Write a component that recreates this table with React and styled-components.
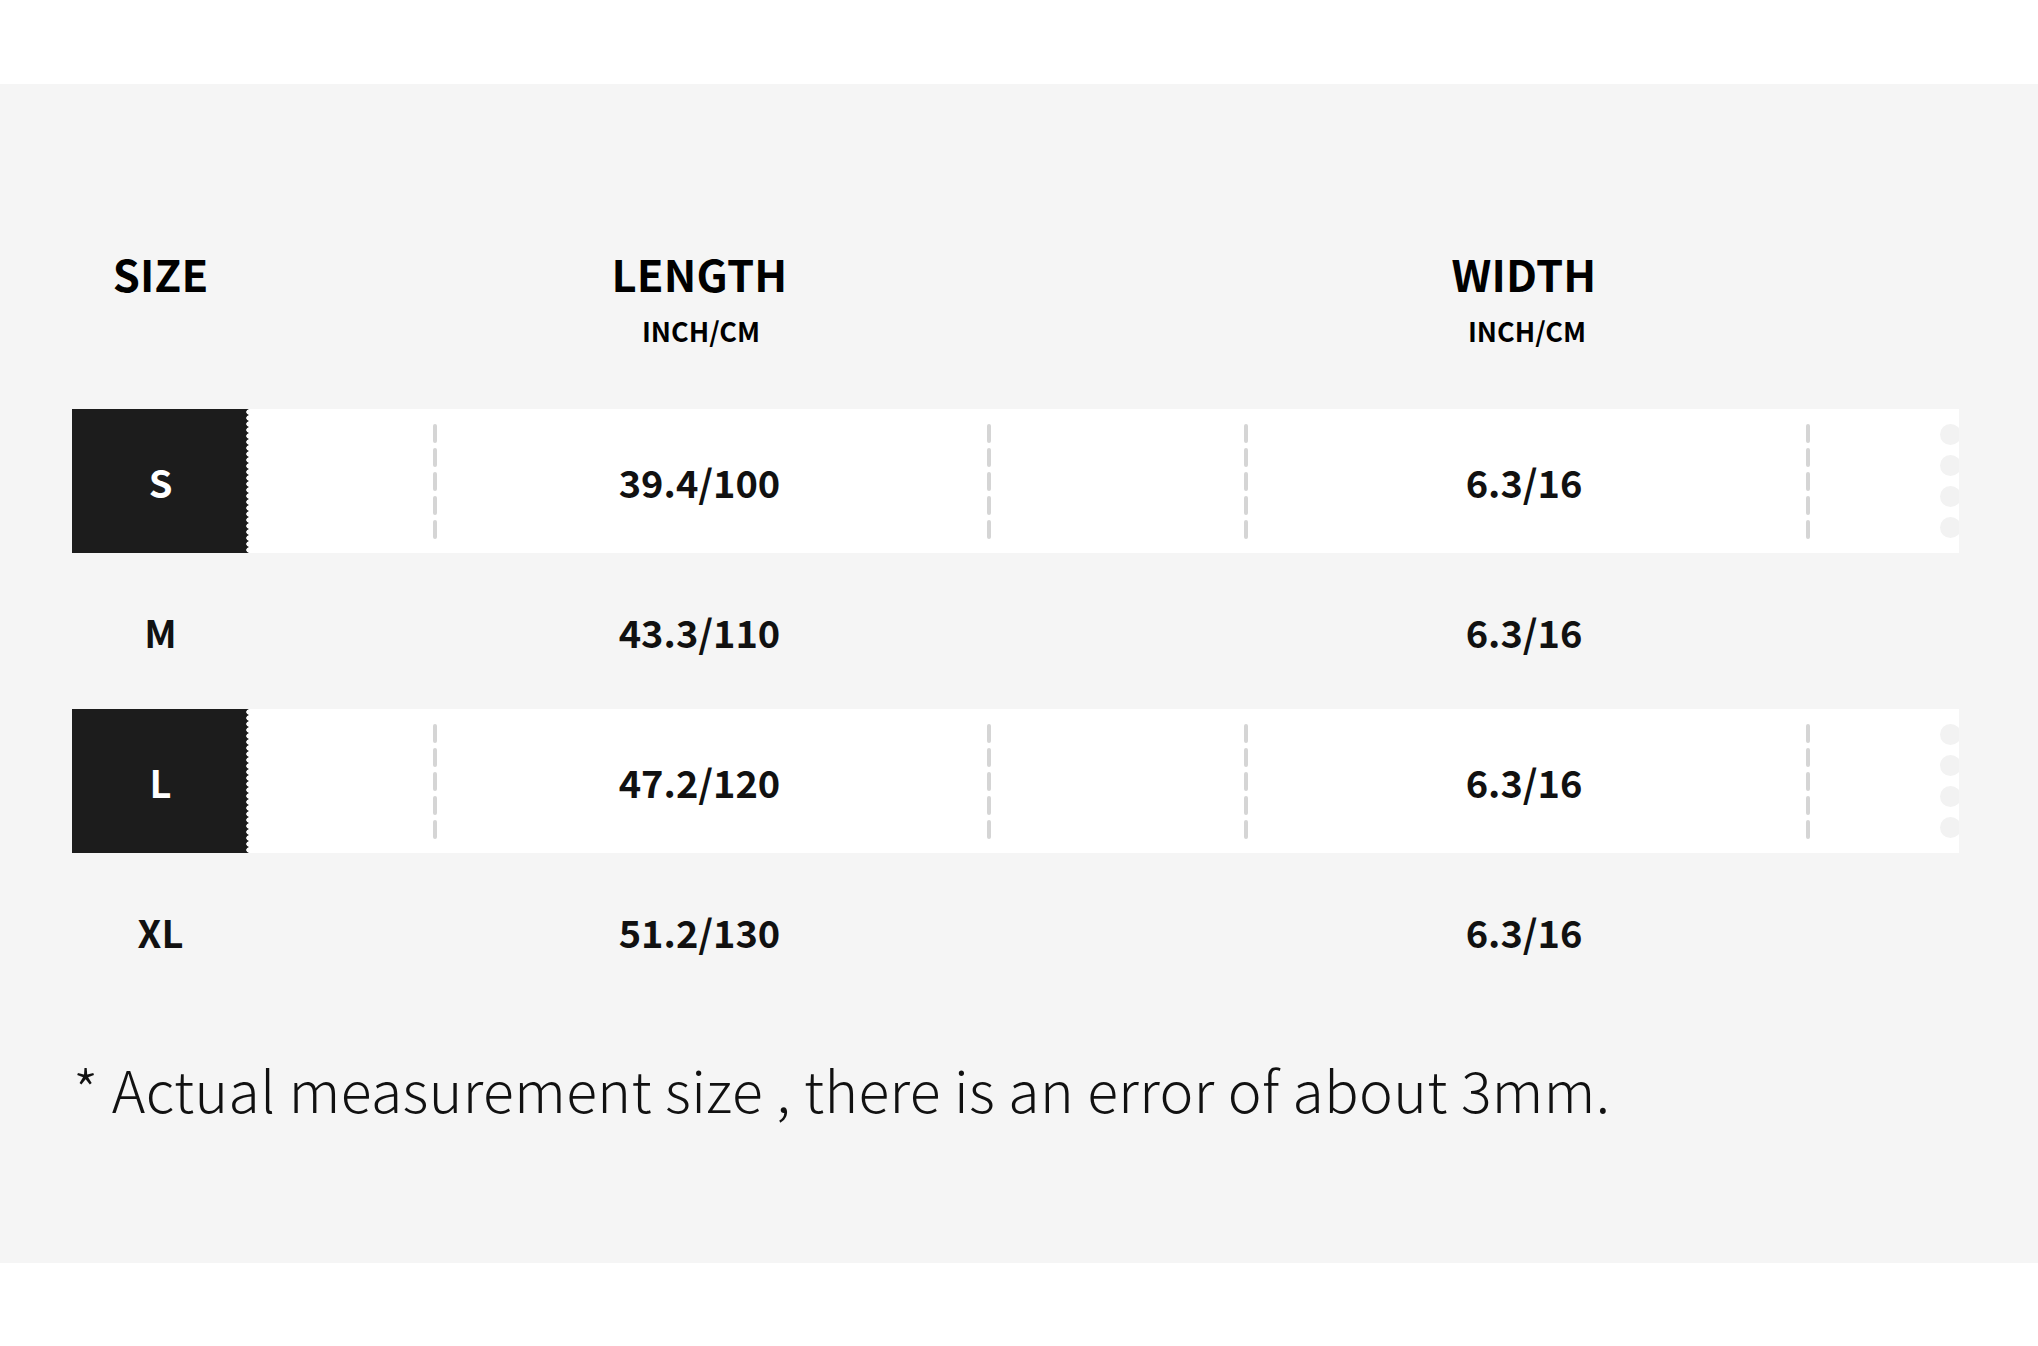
import React from "react";
import styled, { createGlobalStyle } from "styled-components";

const Global = createGlobalStyle`
  html, body { margin: 0; padding: 0; background: #ffffff; }
  body { font-family: "Noto Sans CJK JP", "Noto Sans", sans-serif; color: #111; }
`;

const COLS = "177px 184px 4px 550px 4px 253px 4px 558px 4px 149px";

const Page = styled.div`
  width: 2038px;
  padding-top: 84px;
  padding-bottom: 82px;
  background: #ffffff;
`;

const Panel = styled.section`
  background: #f5f5f5;
  padding: 168px 0 146px 72px;
`;

const Table = styled.div`
  width: 1887px;
  display: flex;
  flex-direction: column;
`;

const HeaderRow = styled.div`
  display: grid;
  grid-template-columns: ${COLS};
  margin-bottom: 62px;
`;

const HeadCell = styled.div`
  grid-column: ${(p) => p.$col};
  display: flex;
  flex-direction: column;
  align-items: center;
  padding-right: ${(p) => p.$pr || 0}px;
`;

const HeadTitle = styled.div`
  font-size: 43.5px;
  line-height: 44px;
  font-weight: 700;
  color: #000;
  letter-spacing: 0.2px;
`;

const HeadSub = styled.div`
  margin-top: 21px;
  font-size: 27px;
  line-height: 27px;
  font-weight: 700;
  color: #000;
  padding-left: ${(p) => p.$pl || 0}px;
`;

const RowSlot = styled.div`
  height: 150px;
  display: flex;
  align-items: center;
`;

const Row = styled.div`
  flex: 1;
  height: 144px;
  display: grid;
  grid-template-columns: ${COLS};
  align-items: stretch;
  background: ${(p) => (p.$striped ? "#ffffff" : "transparent")};
`;

const SizeCell = styled.div`
  display: flex;
  align-items: center;
  justify-content: center;
  font-size: 38px;
  font-weight: 700;
  color: ${(p) => (p.$striped ? "#ffffff" : "#111")};
  background: ${(p) =>
    p.$striped
      ? "radial-gradient(circle at 100% 50%, #ffffff 2.4px, transparent 3px) right top / 6px 6px repeat-y, #1c1c1c"
      : "transparent"};
`;

const ValueCell = styled.div`
  grid-column: ${(p) => p.$col};
  display: flex;
  align-items: center;
  justify-content: center;
  padding-right: ${(p) => p.$pr || 0}px;
  font-size: 38px;
  font-weight: 700;
  color: #111;
`;

const Dash = styled.div`
  grid-column: ${(p) => p.$col};
  align-self: center;
  display: flex;
  flex-direction: column;
  gap: 5px;
  visibility: ${(p) => (p.$show ? "visible" : "hidden")};
`;

const DashSeg = styled.span`
  display: block;
  width: 4px;
  height: 19px;
  border-radius: 2px;
  background: #d5d5d5;
`;

const Tail = styled.div`
  grid-column: 10;
  display: flex;
  flex-direction: column;
  align-items: flex-end;
  justify-content: center;
  gap: 10px;
  overflow: hidden;
  visibility: ${(p) => (p.$show ? "visible" : "hidden")};
`;

const Notch = styled.span`
  display: block;
  width: 21px;
  height: 21px;
  border-radius: 50%;
  background: #f2f2f2;
  margin-right: -2px;
`;

const Note = styled.p`
  margin: 54px 0 0 1px;
  font-size: 57px;
  line-height: 57px;
  font-weight: 200;
  color: #111;
  letter-spacing: 0.45px;
`;

const rows = [
  { size: "S", length: "39.4/100", width: "6.3/16", striped: true },
  { size: "M", length: "43.3/110", width: "6.3/16", striped: false },
  { size: "L", length: "47.2/120", width: "6.3/16", striped: true },
  { size: "XL", length: "51.2/130", width: "6.3/16", striped: false },
];

const DashLine = ({ col, show }) => (
  <Dash $col={col} $show={show}>
    {[0, 1, 2, 3, 4].map((i) => (
      <DashSeg key={i} />
    ))}
  </Dash>
);

export default function App() {
  return (
    <>
      <Global />
      <Page>
        <Panel>
          <Table>
            <HeaderRow>
              <HeadCell $col={1}>
                <HeadTitle>SIZE</HeadTitle>
              </HeadCell>
              <HeadCell $col={4} $pr={25}>
                <HeadTitle>LENGTH</HeadTitle>
                <HeadSub $pl={3}>INCH/CM</HeadSub>
              </HeadCell>
              <HeadCell $col={8} $pr={6}>
                <HeadTitle>WIDTH</HeadTitle>
                <HeadSub $pl={6}>INCH/CM</HeadSub>
              </HeadCell>
            </HeaderRow>
            {rows.map((r) => (
              <RowSlot key={r.size}>
                <Row $striped={r.striped}>
                  <SizeCell $striped={r.striped}>{r.size}</SizeCell>
                  <DashLine col={3} show={r.striped} />
                  <ValueCell $col={4} $pr={25}>
                    {r.length}
                  </ValueCell>
                  <DashLine col={5} show={r.striped} />
                  <DashLine col={7} show={r.striped} />
                  <ValueCell $col={8} $pr={6}>
                    {r.width}
                  </ValueCell>
                  <DashLine col={9} show={r.striped} />
                  <Tail $show={r.striped}>
                    {[0, 1, 2, 3].map((i) => (
                      <Notch key={i} />
                    ))}
                  </Tail>
                </Row>
              </RowSlot>
            ))}
          </Table>
          <Note>* Actual measurement size , there is an error of about 3mm.</Note>
        </Panel>
      </Page>
    </>
  );
}
